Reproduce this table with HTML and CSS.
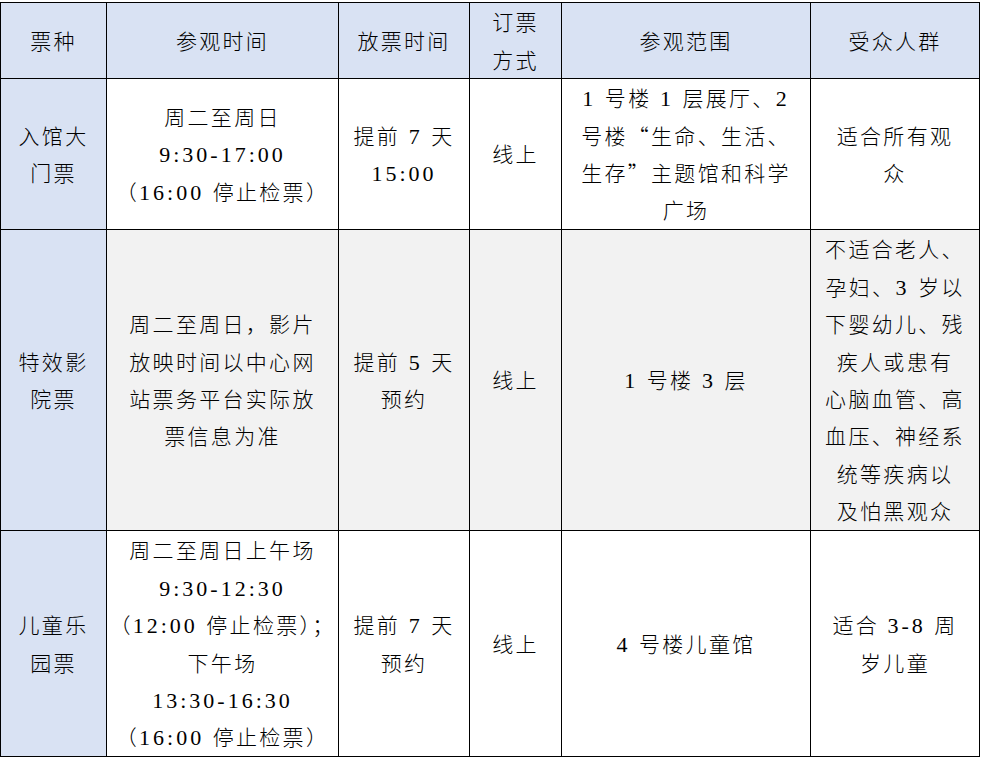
FILE: index.html
```html
<!DOCTYPE html>
<html lang="zh-CN">
<head>
<meta charset="utf-8">
<title>票种</title>
<link rel="stylesheet" href="styles.css">
</head>
<body>
<div class="wrap">
<table class="tickets">
  <tr class="r-head">
    <th class="c1">票种</th>
    <th class="c2">参观时间</th>
    <th class="c3">放票时间</th>
    <th class="c4">订票<br>方式</th>
    <th class="c5">参观范围</th>
    <th class="c6">受众人群</th>
  </tr>
  <tr class="r1">
    <td class="kind">入馆大<br>门票</td>
    <td>周二至周日<br><span class="n">9:30-17:00</span><br>（<span class="n">16:00 </span>停止检票）</td>
    <td>提前<span class="n"> 7 </span>天<br><span class="n">15:00</span></td>
    <td>线上</td>
    <td><span class="n">1 </span>号楼<span class="n"> 1 </span>层展厅、<span class="n">2</span><br>号楼<span class="q">“</span>生命、生活、<br>生存<span class="q">”</span>主题馆和科学<br>广场</td>
    <td>适合所有观<br>众</td>
  </tr>
  <tr class="r2">
    <td class="kind">特效影<br>院票</td>
    <td>周二至周日，影片<br>放映时间以中心网<br>站票务平台实际放<br>票信息为准</td>
    <td>提前<span class="n"> 5 </span>天<br>预约</td>
    <td>线上</td>
    <td><span class="n">1 </span>号楼<span class="n"> 3 </span>层</td>
    <td>不适合老人、<br>孕妇、<span class="n">3 </span>岁以<br>下婴幼儿、残<br>疾人或患有<br>心脑血管、高<br>血压、神经系<br>统等疾病以<br>及怕黑观众</td>
  </tr>
  <tr class="r3">
    <td class="kind">儿童乐<br>园票</td>
    <td>周二至周日上午场<br><span class="n">9:30-12:30</span><br>（<span class="n">12:00 </span>停止检票）；<br>下午场<br><span class="n">13:30-16:30</span><br>（<span class="n">16:00 </span>停止检票）</td>
    <td>提前<span class="n"> 7 </span>天<br>预约</td>
    <td>线上</td>
    <td><span class="n">4 </span>号楼儿童馆</td>
    <td>适合<span class="n"> 3-8 </span>周<br>岁儿童</td>
  </tr>
</table>
</div>
</body>
</html>
```

FILE: styles.css
```css
html, body {
  margin: 0;
  padding: 0;
  background: #ffffff;
}
.wrap {
  padding-top: 2px;
}
.tickets {
  border-collapse: separate;
  border-spacing: 0;
  table-layout: fixed;
  width: 980px;
  border-left: 1px solid #000;
  border-top: 1px solid #000;
  font-family: "Noto Sans CJK SC", sans-serif;
  font-size: 21px;
  font-weight: 300;
  letter-spacing: 2.3px;
  line-height: 37.4px;
  color: #000;
}
.tickets th,
.tickets td {
  box-sizing: border-box;
  border-right: 1px solid #000;
  border-bottom: 1px solid #000;
  padding: 0;
  text-align: center;
  vertical-align: middle;
  font-weight: 300;
  white-space: nowrap;
}
.tickets th {
  background: #d9e2f3;
}
.c1 { width: 106px; }
.c2 { width: 232px; }
.c3 { width: 131px; }
.c4 { width: 92px; }
.c5 { width: 249px; }
.c6 { width: 169px; }
.r-head { height: 76px; }
.r1 { height: 151px; }
.r2 { height: 301px; }
.r3 { height: 226px; }
.r2 td {
  background: #f2f2f2;
}
.tickets td.kind {
  background: #d9e2f3;
}
.n {
  font-family: "Liberation Serif", "Times New Roman", serif;
  font-weight: 400;
  font-size: 22px;
  line-height: 1;
  letter-spacing: 3px;
}
.q {
  font-feature-settings: "fwid" 1;
}
```
